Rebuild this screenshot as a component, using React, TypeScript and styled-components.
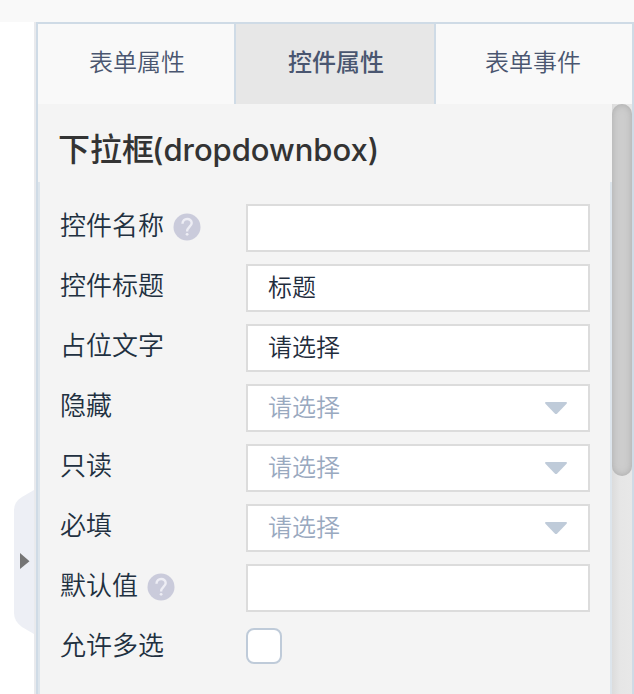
import React from 'react';
import styled, { createGlobalStyle } from 'styled-components';

const GlobalStyle = createGlobalStyle`
  *, *::before, *::after { box-sizing: border-box; }
  body {
    margin: 0;
    overflow: hidden;
    background: #fff;
    font-family: "Noto Sans CJK SC", sans-serif;
  }
`;

const Page = styled.div`
  display: flex;
  flex-direction: column;
  width: 634px;
  height: 694px;
`;

const TopBar = styled.header`
  flex: 0 0 22px;
  background: #f9f9f9;
`;

const Workspace = styled.div`
  flex: 1;
  display: flex;
  min-height: 0;
`;

const Gutter = styled.aside`
  flex: 0 0 36px;
  padding: 468px 0 0 14px;
  border-right: 2px solid #e9eaed;
  background: #fff;
`;

const CollapseHandle = styled.svg`
  display: block;
  width: 20px;
  height: 144px;
`;

const Panel = styled.main`
  flex: 1;
  display: flex;
  flex-direction: column;
  border: 2px solid #cfdbe6;
  border-bottom: 0;
`;

const Tabs = styled.nav`
  display: grid;
  grid-template-columns: 196px 202px 196px;
  flex: 0 0 80px;
`;

const Tab = styled.button<{ $active?: boolean }>`
  border: 0 solid #cfdbe6;
  border-width: ${p => (p.$active ? '0 2px' : '0')};
  background: ${p => (p.$active ? '#e7e7e7' : '#f9f9f9')};
  color: #4a5670;
  font-family: inherit;
  font-size: 24px;
  font-weight: ${p => (p.$active ? 500 : 350)};
  line-height: 36px;
  padding: 0 0 6px 2px;

  &:last-child { padding: 0 2px 6px 0; }
`;

const Body = styled.div`
  flex: 1;
  display: flex;
  min-height: 0;
`;

const Content = styled.section`
  flex: 1;
  display: flex;
  flex-direction: column;
  background: #f4f4f4;
`;

const Title = styled.h1`
  flex: 0 0 78px;
  margin: 0;
  padding: 19px 0 0 20px;
  color: #333;
  font-size: 32px;
  font-weight: 500;
  line-height: 48px;
  white-space: nowrap;
`;

const TitleName = styled.span`
  margin-left: -2px;
  font-family: Inter, sans-serif;
  font-size: 31px;
  letter-spacing: -0.04px;
`;

const Form = styled.form`
  flex: 1;
  display: flex;
  flex-direction: column;
  gap: 12px;
  padding: 22px 20px 0;
  border: solid #dde5ec;
  border-width: 0 2px;
`;

const Row = styled.div`
  display: grid;
  grid-template-columns: 186px 344px;
  height: 48px;
`;

const Label = styled.label`
  display: flex;
  align-items: center;
  gap: 9px;
  height: 38px;
  color: #213040;
  font-size: 26px;
  font-weight: 350;
`;

const HelpIcon = styled.svg`
  width: 28px;
  height: 28px;
  margin-top: 8px;
`;

const Field = styled.div<{ $placeholder?: boolean }>`
  display: flex;
  align-items: center;
  justify-content: space-between;
  padding: 0 20px 5px 20px;
  border: 2px solid #dcdcdc;
  background: #fff;
  color: ${p => (p.$placeholder ? '#99a9bf' : '#1f2d3d')};
  font-size: 24px;
  font-weight: 350;
`;

const Caret = styled.svg`
  width: 24px;
  height: 14px;
  margin-top: 5px;
`;

const Checkbox = styled.div`
  width: 36px;
  height: 36px;
  margin-top: 4px;
  border: 2px solid #bfcbd9;
  border-radius: 8px;
  background: #fff;
`;

const ScrollTrack = styled.div`
  width: 20px;
  background: linear-gradient(90deg, #dcdcdc, #e6e6e6 40%, #e8e8e8);
`;

const ScrollThumb = styled.div`
  height: 372px;
  border-radius: 10px;
  background: #cdcdcd;
  box-shadow: inset 0 0 7px #aaa;
`;

function Help() {
  return (
    <HelpIcon viewBox="0 0 28 28" aria-hidden="true">
      <circle cx="14" cy="14" r="13.5" fill="#cacbdb" />
      <path d="M9.5 10.8C9.5 4.4 18.7 4.6 18.7 10c0 3.5-4.6 3.8-4.6 8.5" fill="none" stroke="#eeeef5" strokeWidth="2.4" />
      <circle cx="14.1" cy="21.3" r="1.4" fill="#eeeef5" />
    </HelpIcon>
  );
}

type Item = {
  label: string;
  help?: boolean;
  kind: 'text' | 'select' | 'check';
  value?: string;
};

const items: Item[] = [
  { label: '控件名称', help: true, kind: 'text' },
  { label: '控件标题', kind: 'text', value: '标题' },
  { label: '占位文字', kind: 'text', value: '请选择' },
  { label: '隐藏', kind: 'select' },
  { label: '只读', kind: 'select' },
  { label: '必填', kind: 'select' },
  { label: '默认值', help: true, kind: 'text' },
  { label: '允许多选', kind: 'check' },
];

function Control({ kind, value }: Item) {
  if (kind === 'check') return <Checkbox role="checkbox" aria-checked={false} />;
  if (kind === 'text') return <Field>{value}</Field>;
  return (
    <Field $placeholder>
      请选择
      <Caret viewBox="0 0 24 14" aria-hidden="true">
        <path d="M2 1h20q1.8.2.6 1.8L13.2 12.4q-1.2 1-2.4 0L1.4 2.8Q.2 1.2 2 1z" fill="#bfcbd9" />
      </Caret>
    </Field>
  );
}

export default function App() {
  return (
    <>
      <GlobalStyle />
      <Page>
        <TopBar />
        <Workspace>
          <Gutter>
            <CollapseHandle viewBox="0 0 20 144" aria-hidden="true">
              <path d="M20 0L8 7Q0 12 0 20V123Q0 131 8 137L20 144z" fill="#edeff5" />
              <path d="M6 63L15.5 71.2L6 79z" fill="#757575" />
            </CollapseHandle>
          </Gutter>
          <Panel>
            <Tabs>
              <Tab>表单属性</Tab>
              <Tab $active>控件属性</Tab>
              <Tab>表单事件</Tab>
            </Tabs>
            <Body>
              <Content>
                <Title>下拉框<TitleName>(dropdownbox)</TitleName></Title>
                <Form>
                  {items.map(item => (
                    <Row key={item.label}>
                      <Label>{item.label}{item.help && <Help />}</Label>
                      <Control {...item} />
                    </Row>
                  ))}
                </Form>
              </Content>
              <ScrollTrack><ScrollThumb /></ScrollTrack>
            </Body>
          </Panel>
        </Workspace>
      </Page>
    </>
  );
}
